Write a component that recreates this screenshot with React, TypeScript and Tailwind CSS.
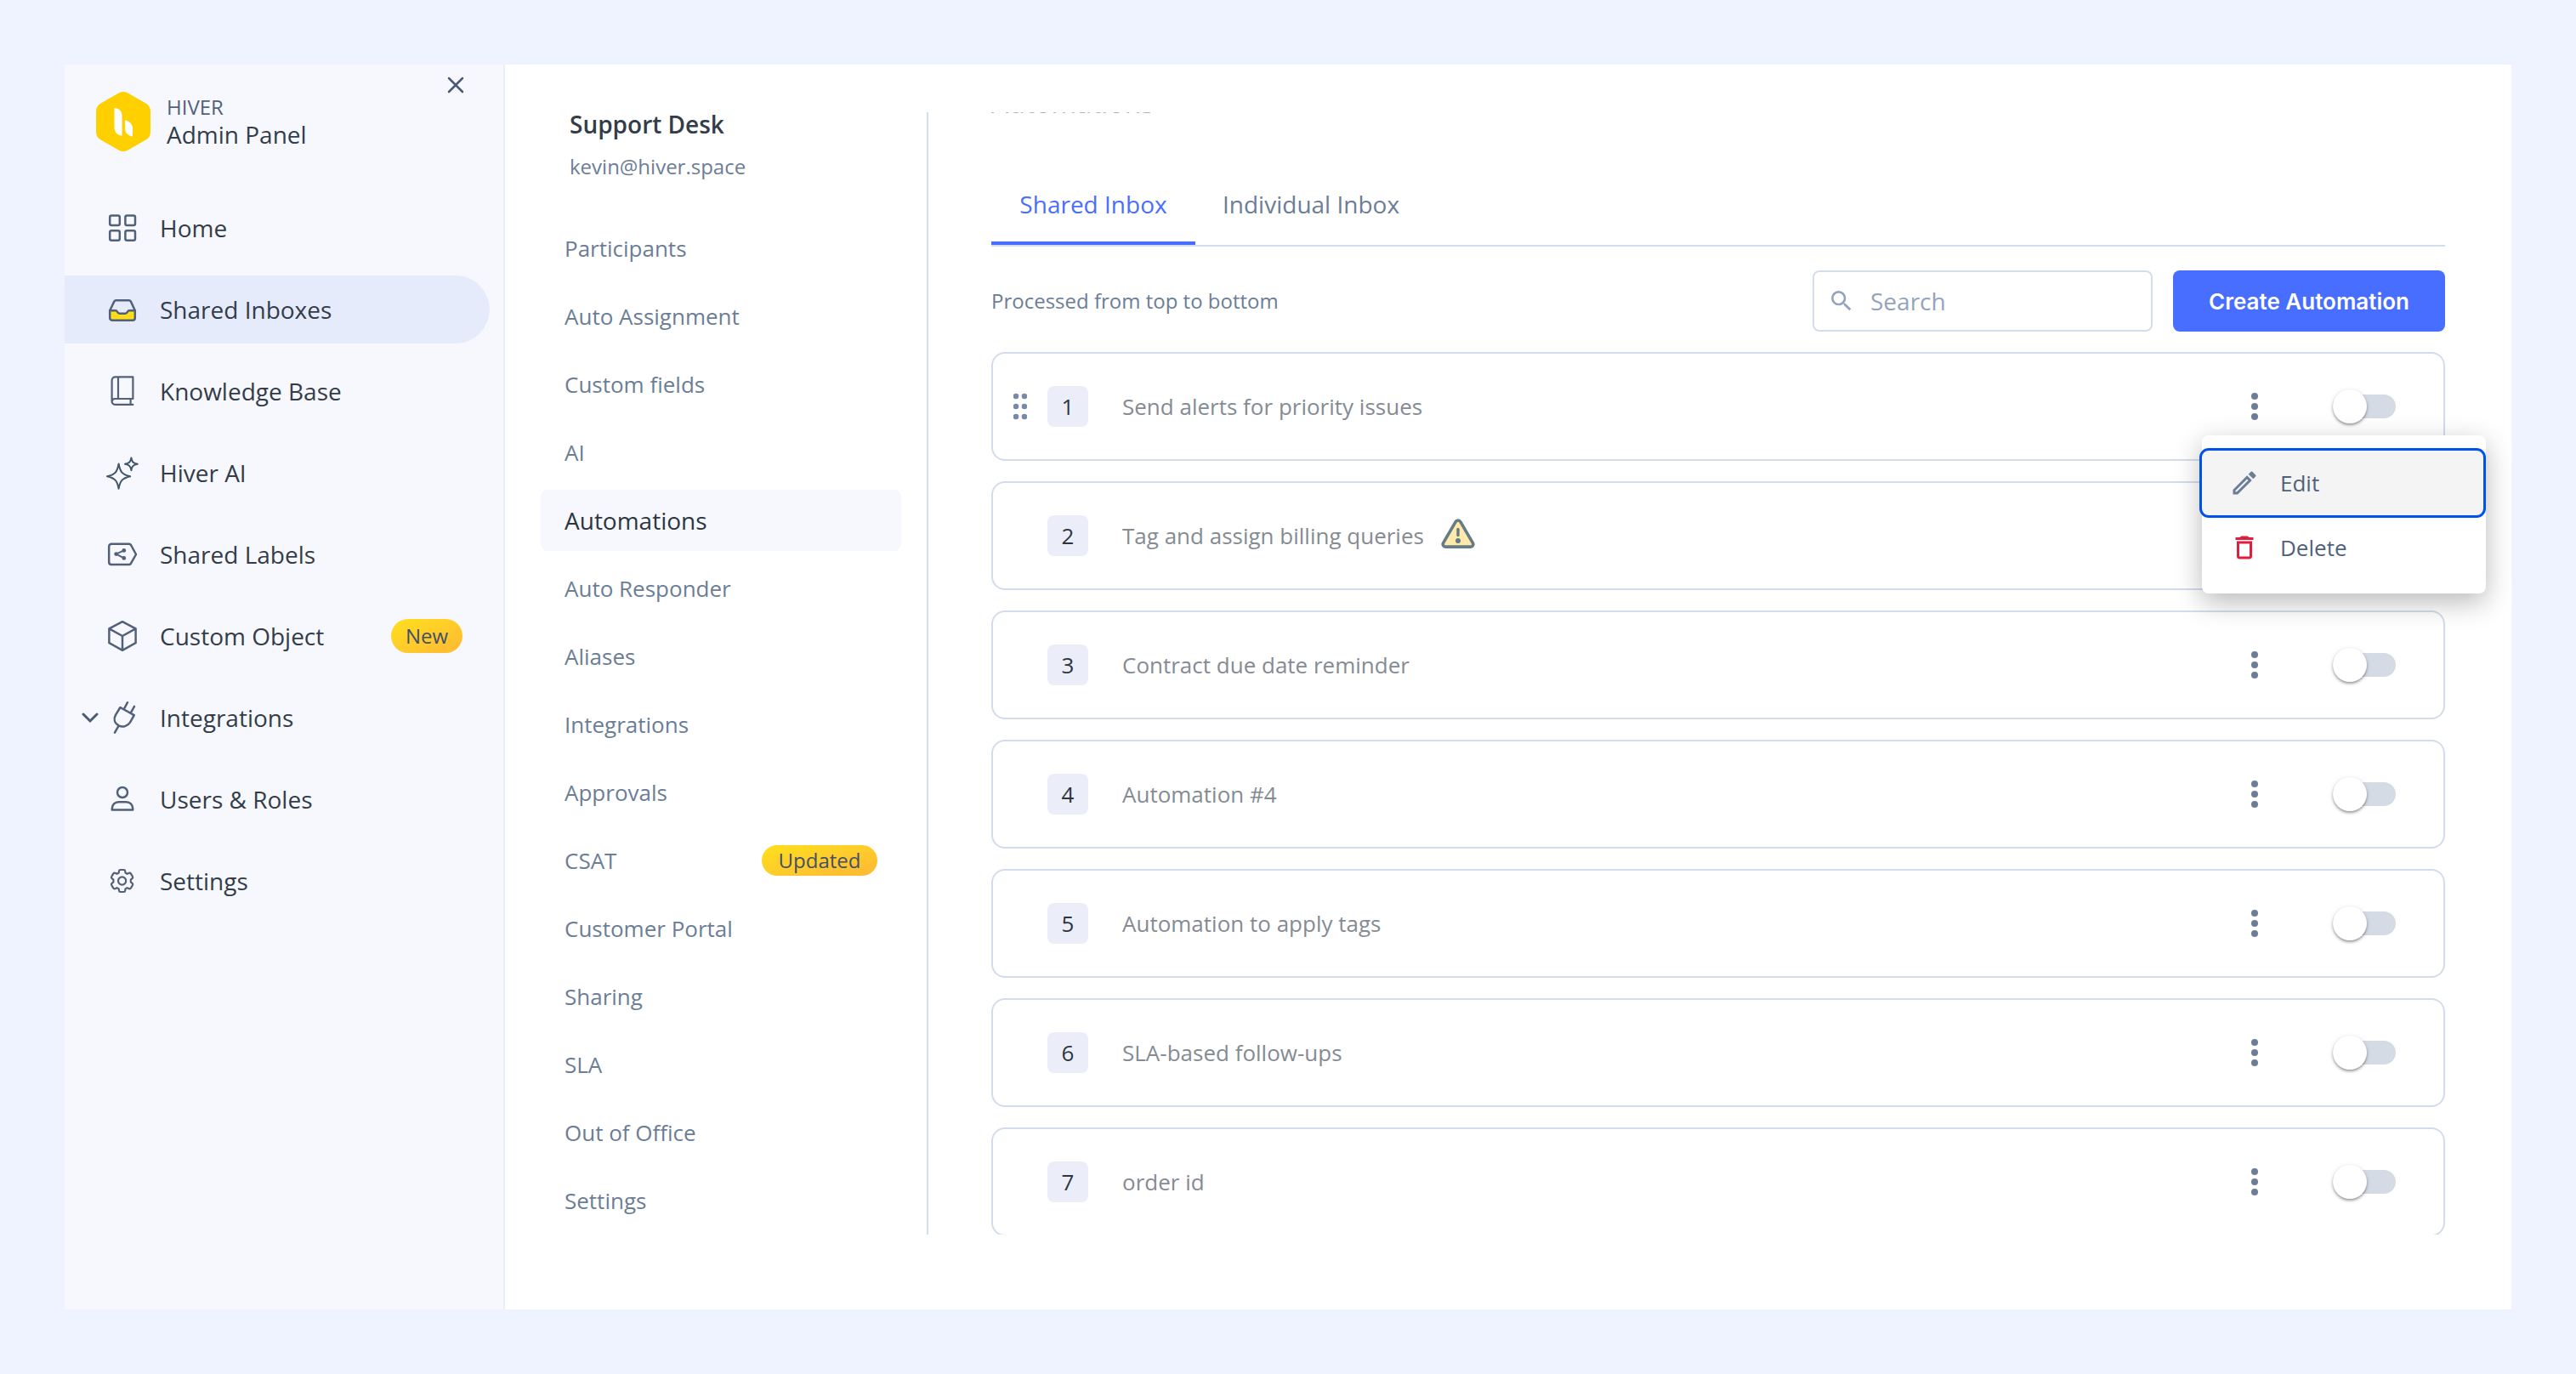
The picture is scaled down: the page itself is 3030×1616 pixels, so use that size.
import { useState } from 'react';
import type { ReactNode } from 'react';
import { MdOutlineDelete, MdOutlineEdit, MdSearch } from 'react-icons/md';

interface NavItem {
  label: string;
  icon: ReactNode;
  badge?: string;
  active?: boolean;
  expandable?: boolean;
}

interface InboxLink {
  label: string;
  badge?: string;
  active?: boolean;
}

interface Automation {
  id: number;
  name: string;
  warning?: boolean;
  menuOpen?: boolean;
}

// Every sidebar icon is drawn around the origin of a 40x40 box
function Icon({ children }: { children: ReactNode }) {
  return (
    <svg
      className="size-10 shrink-0 text-[#52617a]"
      viewBox="-20 -20 40 40"
      fill="none"
      stroke="currentColor"
      strokeWidth={2.5}
      strokeLinecap="round"
      strokeLinejoin="round"
      aria-hidden="true"
    >
      {children}
    </svg>
  );
}

const navItems: NavItem[] = [
  {
    label: 'Home',
    icon: (
      <Icon>
        <rect x="-14.8" y="-14.6" width="11.6" height="11.6" rx="2" />
        <rect x="3.4" y="-14.6" width="11.6" height="11.6" rx="2" />
        <rect x="-14.8" y="3.2" width="11.6" height="11.6" rx="2" />
        <rect x="3.4" y="3.2" width="11.6" height="11.6" rx="2" />
      </Icon>
    ),
  },
  {
    label: 'Shared Inboxes',
    active: true,
    icon: (
      <Icon>
        <path d="M-14.8 1.2h7.2c1.4 0 1.8 3.6 4 3.6h7.2c2.2 0 2.6-3.6 4-3.6h7.2V10a2.8 2.8 0 0 1-2.8 2.8h-24A2.8 2.8 0 0 1-14.8 10Z" fill="#ffdd1a" />
        <path d="M-14.8 1.2-9.6-9.6A2.4 2.4 0 0 1-7.4-10.8H7.6A2.4 2.4 0 0 1 9.8-9.6L14.8 1.2" />
      </Icon>
    ),
  },
  {
    label: 'Knowledge Base',
    icon: (
      <Icon>
        <path d="M12.4 9V-16.6H-8.4A4 4 0 0 0-12.4-12.6V12.2A3.6 3.6 0 0 0-8.8 15.8H12.4M12.4 9H-8.8A3.4 3.4 0 0 0-12.2 12M-5-16.6V9M9.6 9V15.4" strokeWidth={2.2} />
      </Icon>
    ),
  },
  {
    label: 'Hiver AI',
    icon: (
      <Icon>
        <path
          d="M-4.4-10.5C-2.6-1-.6 2 9.2 4.3-.6 6.6-2.6 9.6-4.4 18.7-6.2 9.6-8.2 6.6-18 4.3-8.2 2-6.2-1-4.4-10.5ZM10.4-17.6c.8 4.6 2 6.4 7.4 7.4-5.4 1-6.6 2.8-7.4 7.4-.8-4.6-2-6.4-7.4-7.4 5.4-1 6.6-2.8 7.4-7.4Z"
          stroke="#40566a"
          strokeWidth={2}
        />
      </Icon>
    ),
  },
  {
    label: 'Shared Labels',
    icon: (
      <Icon>
        <path d="M-13-12.2H8a2.6 2.6 0 0 1 2 1.2l6 11-6 10.6a2.6 2.6 0 0 1-2 1.4H-13A2.8 2.8 0 0 1-15.8 9.2V-9.4A2.8 2.8 0 0 1-13-12.2Z" />
        <path d="M1.8-4.6-7.4-.4 1.8 4.4" strokeWidth={2} />
        <circle cx="1.8" cy="-4.6" r="1.4" fill="currentColor" strokeWidth={2} />
        <circle cx="-7.4" cy="-.4" r="1.4" fill="currentColor" strokeWidth={2} />
        <circle cx="1.8" cy="4.4" r="1.4" fill="currentColor" strokeWidth={2} />
      </Icon>
    ),
  },
  {
    label: 'Custom Object',
    badge: 'New',
    icon: (
      <Icon>
        <path d="M0-16.8 15.6-8.6V8.2L0 16.8-15.6 8.2V-8.6ZM-15.6-8.6 0 0 15.6-8.6M0 0V16.8" />
      </Icon>
    ),
  },
  {
    label: 'Integrations',
    expandable: true,
    icon: (
      <Icon>
        <path d="M-2.6-12 13.8-2.8 9 5.6C6.2 10 .4 12-4.4 9.4-9.4 6.4-10.6 1.4-8-3.2ZM1.8-10 6-17.8M9.8-5.6 14-13.2M-4.4 9.6-9 17.6" />
      </Icon>
    ),
  },
  {
    label: 'Users & Roles',
    icon: (
      <Icon>
        <circle cx="0" cy="-8" r="6" />
        <path d="M-4.6 3.2H4.6A7.6 7.6 0 0 1 12.2 10.8V12.4H-12.2V10.8A7.6 7.6 0 0 1-4.6 3.2Z" />
      </Icon>
    ),
  },
  {
    label: 'Settings',
    icon: (
      <Icon>
        <circle cx="-.4" cy="0" r="4.6" strokeWidth={2.2} />
        <path
          d="M-2.4-13H1.6Q3-13 3.2-11.6L3.5-9.4 5.6-8.2 7.8-9.2Q9.2-9.6 10-8.4L12-5Q12.7-3.8 11.6-2.8L9.8-1.3V1.3L11.6 2.8Q12.7 3.8 12 5L10 8.4Q9.2 9.6 7.8 9.2L5.6 8.2 3.5 9.4 3.2 11.6Q3 13 1.6 13H-2.4Q-3.8 13-4 11.6L-4.3 9.4-6.4 8.2-8.6 9.2Q-10 9.6-10.8 8.4L-12.8 5Q-13.5 3.8-12.4 2.8L-10.6 1.3V-1.3L-12.4-2.8Q-13.5-3.8-12.8-5L-10.8-8.4Q-10-9.6-8.6-9.2L-6.4-8.2-4.3-9.4-4-11.6Q-3.8-13-2.4-13Z"
          strokeWidth={2.2}
        />
      </Icon>
    ),
  },
];

const inboxLinks: InboxLink[] = [
  { label: 'Participants' },
  { label: 'Auto Assignment' },
  { label: 'Custom fields' },
  { label: 'AI' },
  { label: 'Automations', active: true },
  { label: 'Auto Responder' },
  { label: 'Aliases' },
  { label: 'Integrations' },
  { label: 'Approvals' },
  { label: 'CSAT', badge: 'Updated' },
  { label: 'Customer Portal' },
  { label: 'Sharing' },
  { label: 'SLA' },
  { label: 'Out of Office' },
  { label: 'Settings' },
];

const automations: Automation[] = [
  { id: 1, name: 'Send alerts for priority issues', menuOpen: true },
  { id: 2, name: 'Tag and assign billing queries', warning: true },
  { id: 3, name: 'Contract due date reminder' },
  { id: 4, name: 'Automation #4' },
  { id: 5, name: 'Automation to apply tags' },
  { id: 6, name: 'SLA-based follow-ups' },
  { id: 7, name: 'order id' },
];

function Logo() {
  return (
    <svg className="h-[70px] w-[66px] shrink-0" viewBox="0 0 66 70" aria-hidden="true">
      <path
        d="M27.5 1.5a11 11 0 0 1 11 0L59.5 13.5a11 11 0 0 1 5.5 9.5V47a11 11 0 0 1-5.5 9.5L38.5 68.5a11 11 0 0 1-11 0L6.5 56.5A11 11 0 0 1 1 47V23a11 11 0 0 1 5.5-9.5Z"
        fill="#ffd000"
      />
      <path d="M22.5 19C28 19 31.5 23 31.5 28V51.5C26 51.5 22.5 47 22.5 42Z" fill="#fff" />
      <path d="M35 33.5C40 34 44 38 44 43V52.5C39 52 35 48 35 43.5Z" fill="#fff" />
    </svg>
  );
}

function Sidebar() {
  return (
    <aside className="w-[518px] shrink-0 border-r-2 border-[#e9eefa] bg-[#f7f8fd]">
      <div className="flex h-[152px] items-start justify-between px-9 pt-1">
        <div className="flex items-center gap-[18px] pt-7">
          <Logo />
          <div>
            <p className="text-[24px] leading-[30px] text-[#52617a]">HIVER</p>
            <p className="text-[28px] leading-[34px] font-medium text-[#333d49]">Admin Panel</p>
          </div>
        </div>
        <button className="flex size-10 items-center justify-center text-[#4b5b73]" aria-label="Close">
          <svg className="size-5" viewBox="0 0 20 20" stroke="currentColor" strokeWidth={2.5} strokeLinecap="round">
            <path d="M2 2 18 18M18 2 2 18" />
          </svg>
        </button>
      </div>

      <nav className="flex flex-col gap-4 pr-4">
        {navItems.map((item) => (
          <a
            key={item.label}
            href="#"
            className={`flex h-20 items-center rounded-r-full pr-8 pl-5 text-[28px] text-[#333d49] ${
              item.active ? 'bg-[#e6ebfc] font-medium' : ''
            }`}
          >
            {/* Slot for the expand arrow */}
            <span className="mr-2 w-5 shrink-0">
              {item.expandable && (
                <svg className="size-5 text-[#4b5b73]" viewBox="0 0 20 20" fill="none" stroke="currentColor" strokeWidth={3} strokeLinecap="round">
                  <path d="M2 6 10 14 18 6" />
                </svg>
              )}
            </span>
            {item.icon}
            <span className="ml-6 flex-1">{item.label}</span>
            {item.badge && (
              <span className="flex h-10 w-21 items-center justify-center rounded-full bg-linear-to-br from-[#ffe01a] to-[#ffb833] text-[24px] font-medium text-[#43506a]">
                {item.badge}
              </span>
            )}
          </a>
        ))}
      </nav>
    </aside>
  );
}

function InboxNav() {
  return (
    <section className="w-[498px] shrink-0 border-r-2 border-[#d3deea] pr-[30px] pl-[42px]">
      <div className="flex h-[124px] flex-col pl-[34px]">
        <h2 className="text-[28px] leading-7 font-semibold text-[#333d49]">Support Desk</h2>
        <p className="mt-5 text-[24px] leading-8 text-[#6c7d96]">kevin@hiver.space</p>
      </div>
      <nav className="flex flex-col gap-2">
        {inboxLinks.map((link) => (
          <a
            key={link.label}
            href="#"
            className={`flex h-18 items-center justify-between rounded-lg px-7 ${
              link.active
                ? 'bg-[#f7f8fd] text-[28px] font-medium text-[#2c3642]'
                : 'text-[26px] text-[#6c7d96]'
            }`}
          >
            {link.label}
            {link.badge && (
              <span className="flex h-9 w-34 items-center justify-center rounded-full bg-linear-to-br from-[#ffe01a] to-[#ffb833] text-[24px] font-medium text-[#43506a]">
                {link.badge}
              </span>
            )}
          </a>
        ))}
      </nav>
    </section>
  );
}

function RowMenu() {
  return (
    <div
      role="menu"
      className="absolute top-24 -right-[50px] z-10 w-[334px] rounded-lg bg-white pt-[18px] pb-4 text-[26px] text-[#52617a] shadow-[0_10px_32px_rgba(0,0,0,0.28)]"
    >
      <div className="pr-[3px]">
        <button
          role="menuitem"
          className="flex h-19 w-full items-center gap-6 rounded-lg bg-[#f4f4f4] pl-8 outline-3 outline-[#0051f0]"
        >
          <MdOutlineEdit className="size-9 text-[#6c7d96]" />
          Edit
        </button>
      </div>
      <button role="menuitem" className="flex h-19 w-full items-center gap-6 pl-8">
        <MdOutlineDelete className="size-9 text-[#e11d3f]" />
        Delete
      </button>
    </div>
  );
}

function AutomationRow({ automation }: { automation: Automation }) {
  const [enabled, setEnabled] = useState(false);

  return (
    <li className="relative flex h-32 shrink-0 items-center rounded-2xl border-2 border-[#d3dcea] pr-14 pl-6">
      {/* Drag handle */}
      <span className="mr-6 w-4 shrink-0">
        {automation.id === 1 && (
          <svg className="h-8 w-4" viewBox="0 0 16 32" fill="#7889ab" aria-hidden="true">
            <circle cx="3" cy="4" r="3.3" />
            <circle cx="13" cy="4" r="3.3" />
            <circle cx="3" cy="16" r="3.3" />
            <circle cx="13" cy="16" r="3.3" />
            <circle cx="3" cy="28" r="3.3" />
            <circle cx="13" cy="28" r="3.3" />
          </svg>
        )}
      </span>
      <span className="flex size-12 shrink-0 items-center justify-center rounded-lg bg-[#ebeef8] text-[26px] font-medium text-[#2c3642]">
        {automation.id}
      </span>
      <span className="ml-10 text-[26px] font-medium text-[#848b93]">{automation.name}</span>
      {automation.warning && (
        <svg className="mb-1 ml-5 h-9 w-10" viewBox="0 0 40 36" aria-label="Needs attention">
          <path
            d="M17.2 3.6a3.2 3.2 0 0 1 5.6 0L37.4 28.6a3 3 0 0 1-2.6 4.5H5.2a3 3 0 0 1-2.6-4.5Z"
            fill="#ffe9ab"
            stroke="#647c86"
            strokeWidth={3.6}
            strokeLinejoin="round"
          />
          <path d="M20 12.5V19.5" stroke="#647c86" strokeWidth={3.4} strokeLinecap="round" />
          <circle cx="20" cy="26" r="3" fill="#647c86" />
        </svg>
      )}
      <button className="mr-[68px] ml-auto flex size-12 items-center justify-center" aria-label={`Actions for ${automation.name}`}>
        <svg className="h-8 w-2" viewBox="0 0 8 32" fill="#6c7d96">
          <circle cx="4" cy="4" r="4" />
          <circle cx="4" cy="16" r="4" />
          <circle cx="4" cy="28" r="4" />
        </svg>
      </button>
      <label className="flex w-[74px] cursor-pointer items-center">
        <input
          type="checkbox"
          className="peer sr-only"
          checked={enabled}
          onChange={(e) => setEnabled(e.target.checked)}
          aria-label={`Enable ${automation.name}`}
        />
        <span className="flex h-7 w-full items-center rounded-full bg-[#d5dbe4] peer-checked:justify-end peer-checked:bg-[#486eff]">
          <span className="size-10 shrink-0 rounded-full bg-white shadow-[0_2px_3px_rgba(0,0,0,0.35),0_1px_6px_rgba(0,0,0,0.1)]" />
        </span>
      </label>
      {automation.menuOpen && <RowMenu />}
    </li>
  );
}

function AutomationsPane() {
  return (
    <main className="flex min-w-0 flex-1 flex-col overflow-hidden pr-[78px] pl-[74px]">
      {/* Scrolled out of view, only the foot of the letters shows */}
      <h1 className="-mt-[33px] h-[75px] shrink-0 text-[32px] leading-[44px] font-medium text-[#a9b1bc]">Automations</h1>

      <div className="mt-[42px] flex h-[74px] shrink-0 border-b-2 border-[#d3dcea] text-[28px] font-medium" role="tablist">
        <button role="tab" aria-selected="true" className="h-18 w-60 border-b-4 border-[#486eff] pb-5 text-[#486eff]">
          Shared Inbox
        </button>
        <button role="tab" aria-selected="false" className="h-18 px-8 pb-6 text-[#6c7d96]">
          Individual Inbox
        </button>
      </div>

      <div className="mt-7 flex shrink-0 items-center gap-6">
        <p className="flex-1 text-[24px] text-[#6c7d96]">Processed from top to bottom</p>
        <label className="flex h-18 w-[400px] items-center gap-[18px] rounded-lg border-2 border-[#d3deea] px-4">
          <MdSearch className="size-8 shrink-0 text-[#94a3bd]" />
          <input
            type="search"
            placeholder="Search"
            aria-label="Search automations"
            className="w-full min-w-0 text-[28px] text-[#333d49] outline-none placeholder:text-[#94a3bd]"
          />
        </label>
        <button className="h-18 w-80 rounded-lg bg-[#486eff] font-['Inter',sans-serif] text-[26px] font-semibold text-white">
          Create Automation
        </button>
      </div>

      <ul className="mt-6 flex flex-col gap-6">
        {automations.map((automation) => (
          <AutomationRow key={automation.id} automation={automation} />
        ))}
      </ul>
    </main>
  );
}

export default function App() {
  return (
    <div className="flex h-screen bg-[#eff3ff] p-[76px] font-['Open_Sans',sans-serif]">
      <div className="flex min-w-0 flex-1 bg-white">
        <Sidebar />
        <div className="flex min-w-0 flex-1 pt-14 pb-[88px]">
          <InboxNav />
          <AutomationsPane />
        </div>
      </div>
    </div>
  );
}
